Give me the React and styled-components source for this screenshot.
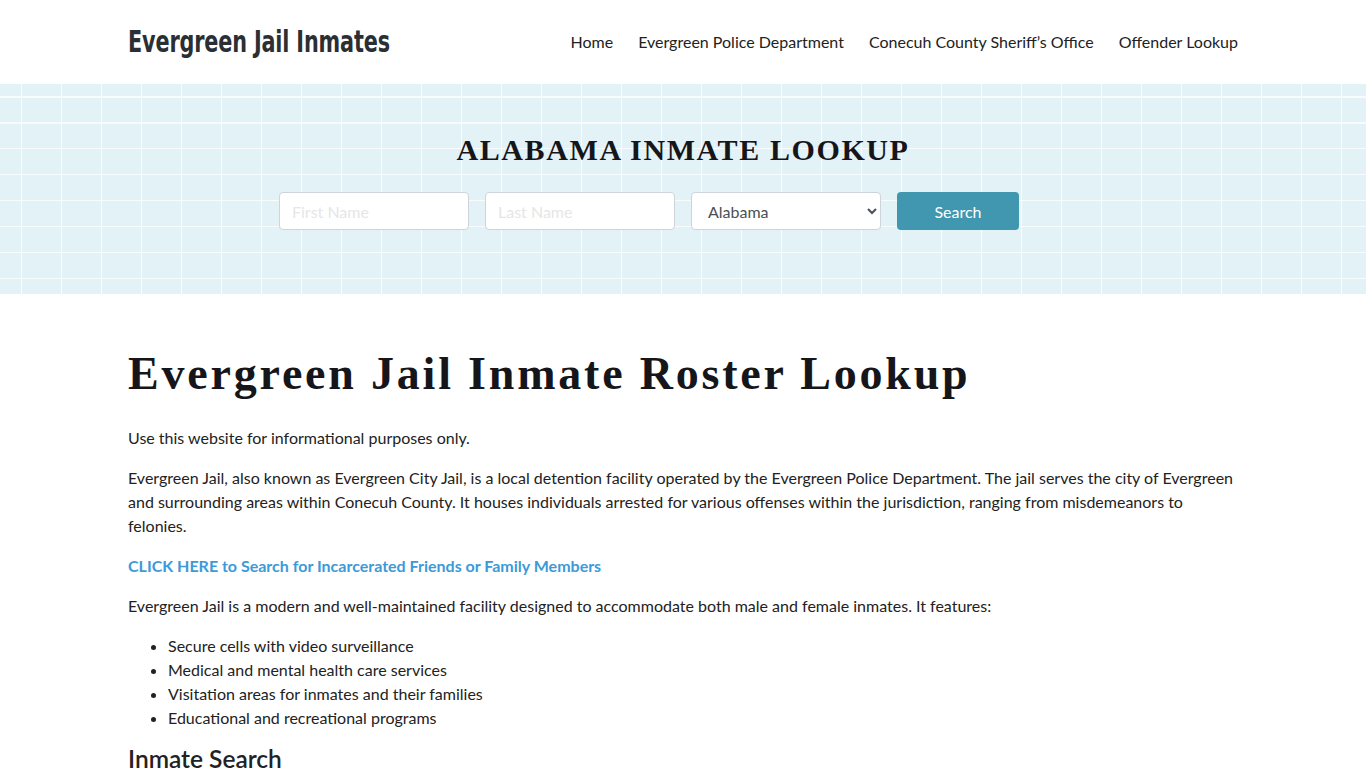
import React from "react";
import styled, { createGlobalStyle } from "styled-components";

const GlobalStyle = createGlobalStyle`
  html, body {
    margin: 0;
    padding: 0;
    background: #fff;
  }
  body {
    font-family: Lato, "Open Sans", sans-serif;
    font-size: 16px;
    line-height: 24px;
    color: #222;
  }
  * {
    box-sizing: border-box;
  }
`;

const Container = styled.div`
  width: 1110px;
  margin: 0 auto;
`;

const Header = styled.header`
  height: 84px;
  background: #fff;
`;

const HeaderInner = styled(Container)`
  height: 100%;
  display: flex;
  align-items: center;
  justify-content: space-between;
`;

const Logo = styled.a`
  font-family: "DejaVu Sans Condensed", "Liberation Sans Narrow", Roboto, sans-serif;
  font-weight: bold;
  font-size: 30px;
  letter-spacing: -0.2px;
  color: #2b2f33;
  text-decoration: none;
  transform: scaleX(0.77);
  transform-origin: left center;
`;

const Nav = styled.nav`
  display: flex;
  gap: 25px;
`;

const NavLink = styled.a`
  font-size: 16px;
  color: #222;
  text-decoration: none;
`;

const Banner = styled.section`
  height: 210px;
  background-color: #e3f2f7;
  background-image:
    repeating-linear-gradient(
      90deg,
      transparent 0 21px,
      rgba(255, 255, 255, 0.75) 21px 22.5px,
      transparent 22.5px 40px
    ),
    repeating-linear-gradient(
      180deg,
      transparent 0 12px,
      rgba(255, 255, 255, 0.75) 12px 13.5px,
      transparent 13.5px 26px
    );
  display: flex;
  flex-direction: column;
  align-items: center;
  padding-top: 48px;
`;

const BannerTitle = styled.h2`
  margin: 0 0 24px;
  font-family: "Liberation Serif", "DejaVu Serif", serif;
  font-weight: bold;
  font-size: 30px;
  line-height: 36px;
  letter-spacing: 1.6px;
  color: #16161a;
  text-transform: uppercase;
`;

const SearchForm = styled.form`
  display: flex;
  gap: 16px;
  padding-right: 68px;
`;

const Field = styled.input`
  width: 190px;
  height: 38px;
  padding: 6px 12px;
  border: 1px solid #ced4da;
  border-radius: 4px;
  background: #fff;
  font-family: Lato, sans-serif;
  font-size: 16px;
  color: #495057;
  &::placeholder {
    color: #e6e6e6;
  }
`;

const Select = styled.select`
  width: 190px;
  height: 38px;
  padding: 6px 12px 6px 12px;
  border: 1px solid #ced4da;
  border-radius: 4px;
  background: #fff;
  font-family: Lato, sans-serif;
  font-size: 16px;
  color: #495057;
`;

const Button = styled.button`
  width: 122px;
  height: 38px;
  border: none;
  border-radius: 4px;
  background: #4097af;
  color: #fff;
  font-family: Lato, sans-serif;
  font-size: 16px;
  cursor: pointer;
`;

const Main = styled(Container)`
  padding-top: 52px;
`;

const Title = styled.h1`
  margin: 0 0 24px;
  font-family: "Liberation Serif", "DejaVu Serif", serif;
  font-weight: bold;
  font-size: 46px;
  line-height: 56px;
  letter-spacing: 2.8px;
  color: #16161a;
`;

const Para = styled.p`
  margin: 0 0 16px;
`;

const Link = styled.a`
  font-weight: bold;
  color: #3c9ad8;
  text-decoration: none;
`;

const List = styled.ul`
  margin: 0 0 14px;
  padding-left: 40px;
`;

const SubTitle = styled.h2`
  margin: 0;
  font-family: Lato, sans-serif;
  font-weight: 600;
  font-size: 24.5px;
  line-height: 30px;
  color: #222;
`;

const navItems = [
  "Home",
  "Evergreen Police Department",
  "Conecuh County Sheriff’s Office",
  "Offender Lookup",
];

const features = [
  "Secure cells with video surveillance",
  "Medical and mental health care services",
  "Visitation areas for inmates and their families",
  "Educational and recreational programs",
];

export default function App() {
  return (
    <>
      <GlobalStyle />
      <Header>
        <HeaderInner>
          <Logo href="#">Evergreen Jail Inmates</Logo>
          <Nav>
            {navItems.map((item) => (
              <NavLink href="#" key={item}>
                {item}
              </NavLink>
            ))}
          </Nav>
        </HeaderInner>
      </Header>
      <Banner>
        <BannerTitle>Alabama Inmate Lookup</BannerTitle>
        <SearchForm onSubmit={(e) => e.preventDefault()}>
          <Field placeholder="First Name" />
          <Field placeholder="Last Name" />
          <Select defaultValue="Alabama">
            <option>Alabama</option>
          </Select>
          <Button type="submit">Search</Button>
        </SearchForm>
      </Banner>
      <Main>
        <Title>Evergreen Jail Inmate Roster Lookup</Title>
        <Para>Use this website for informational purposes only.</Para>
        <Para>
          Evergreen Jail, also known as Evergreen City Jail, is a local detention
          facility operated by the Evergreen Police Department. The jail serves
          the city of Evergreen and surrounding areas within Conecuh County. It
          houses individuals arrested for various offenses within the
          jurisdiction, ranging from misdemeanors to felonies.
        </Para>
        <Para>
          <Link href="#">
            CLICK HERE to Search for Incarcerated Friends or Family Members
          </Link>
        </Para>
        <Para>
          Evergreen Jail is a modern and well-maintained facility designed to
          accommodate both male and female inmates. It features:
        </Para>
        <List>
          {features.map((item) => (
            <li key={item}>{item}</li>
          ))}
        </List>
        <SubTitle>Inmate Search</SubTitle>
      </Main>
    </>
  );
}
